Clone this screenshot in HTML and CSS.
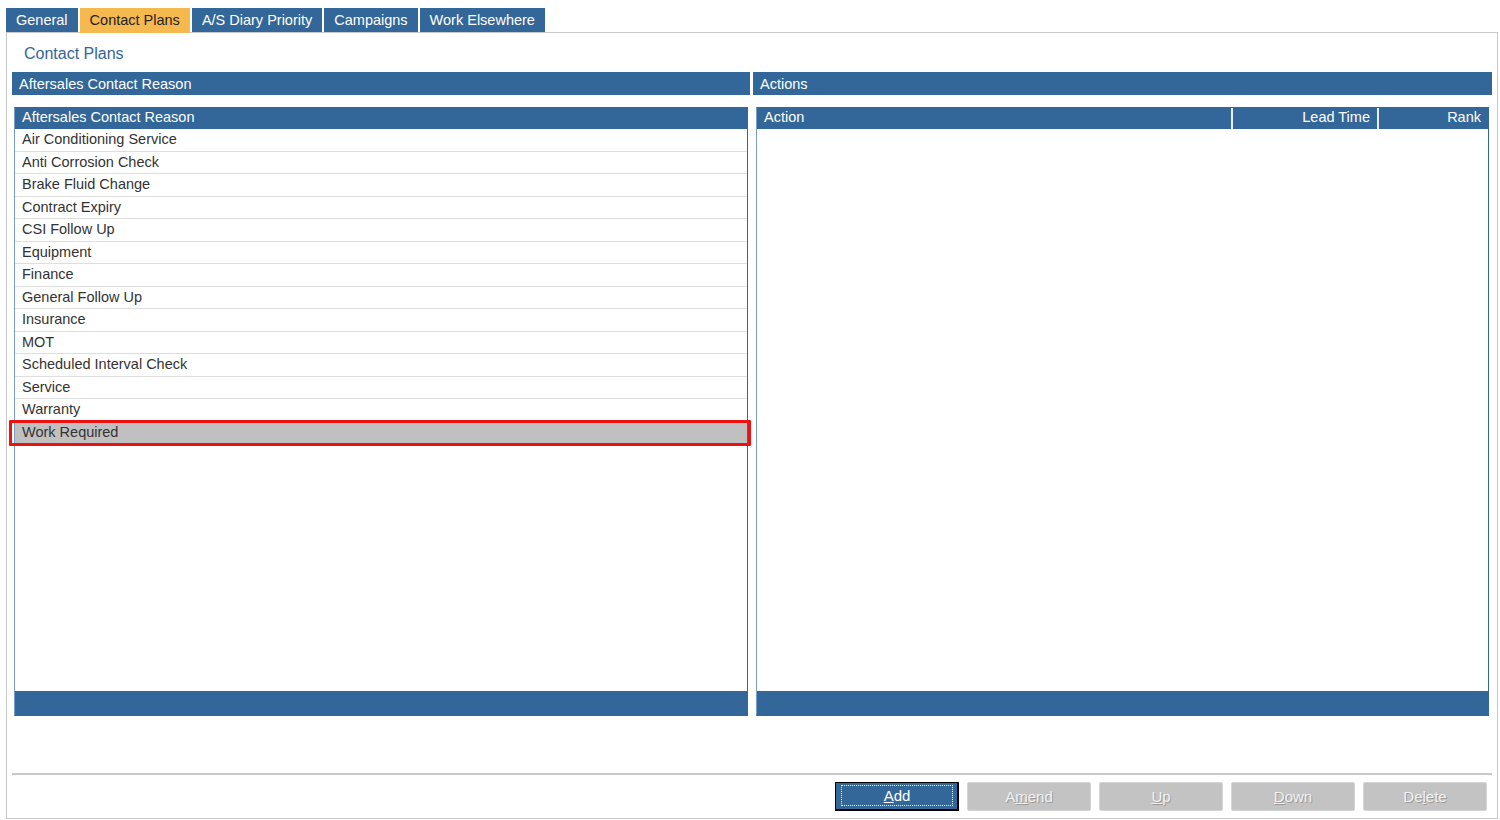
FILE: index.html
```html
<!DOCTYPE html>
<html lang="en">
<head>
  <meta charset="UTF-8" />
  <title>Contact Plans</title>
  <link rel="stylesheet" href="styles.css">
</head>
<body>
  <div class="tabs">
    <div class="tab">General</div>
    <div class="tab active">Contact Plans</div>
    <div class="tab">A/S Diary Priority</div>
    <div class="tab">Campaigns</div>
    <div class="tab">Work Elsewhere</div>
  </div>
  <div class="panel">
    <div class="title">Contact Plans</div>
    <div class="columns">
      <div class="column">
        <div class="bar">Aftersales Contact Reason</div>
        <div class="grid left">
          <div class="grid-head">
            <div class="cell">Aftersales Contact Reason</div>
          </div>
          <div class="grid-body">
            <div class="row">Air Conditioning Service</div>
            <div class="row">Anti Corrosion Check</div>
            <div class="row">Brake Fluid Change</div>
            <div class="row">Contract Expiry</div>
            <div class="row">CSI Follow Up</div>
            <div class="row">Equipment</div>
            <div class="row">Finance</div>
            <div class="row">General Follow Up</div>
            <div class="row">Insurance</div>
            <div class="row">MOT</div>
            <div class="row">Scheduled Interval Check</div>
            <div class="row">Service</div>
            <div class="row">Warranty</div>
            <div class="row selected">Work Required</div>
          </div>
          <div class="grid-foot"></div>
        </div>
      </div>
      <div class="column">
        <div class="bar">Actions</div>
        <div class="grid right">
          <div class="grid-head">
            <div class="cell action">Action</div>
            <div class="cell lead">Lead Time</div>
            <div class="cell rank">Rank</div>
          </div>
          <div class="grid-body"></div>
          <div class="grid-foot"></div>
        </div>
      </div>
    </div>
    <div class="footer">
      <div class="btn primary"><span class="focus"><u>A</u>dd</span></div>
      <div class="btn disabled">A<u>m</u>end</div>
      <div class="btn disabled"><u>U</u>p</div>
      <div class="btn disabled"><u>D</u>own</div>
      <div class="btn disabled">De<u>l</u>ete</div>
    </div>
  </div>
</body>
</html>
```

FILE: styles.css
```css
html, body {
  margin: 0; padding: 0;
  background: #fff;
  font-family: 'Liberation Sans', Arial, sans-serif;
  font-size: 14.5px;
  color: #333;
}
.tabs {
  display: flex; gap: 2px;
  padding: 8px 0 0 6px;
  height: 24px;
}
.tab {
  background: #336699;
  color: #fff;
  padding: 0 10px;
  line-height: 24px;
  height: 24px;
}
.tab.active {
  background: #f6b94f;
  color: #222;
  padding: 1px 10px 0;
  line-height: 23px;
}
.panel {
  margin-left: 6px;
  width: 1492px;
  height: 787px;
  border: 1px solid #c8c8c8;
  display: flex; flex-direction: column;
  padding: 0 5px 0 5px;
  box-sizing: border-box;
}
.title {
  color: #336699;
  font-size: 16px;
  padding: 10px 0 0 12px;
  height: 29px;
  box-sizing: border-box;
  line-height: 22px;
  margin-bottom: 10px;
}
.columns {
  display: grid;
  grid-template-columns: 738px 739px;
  gap: 3px;
}
.bar {
  background: #336699;
  color: #fff;
  height: 23px;
  line-height: 24px;
  padding-left: 7px;
}
.grid {
  margin-top: 12px;
  height: 609px;
  border: 1px solid #336699;
  border-left-color: #7a9fc4;
  display: flex; flex-direction: column;
  box-sizing: border-box;
}
.grid.left { margin: 12px 2px 0 2px; }
.grid.right { margin: 12px 3px 0 3px; }
.grid-head {
  display: flex;
  background: #336699;
  color: #fff;
  height: 21px;
  line-height: 19px;
}
.cell { padding: 0 7px; }
.cell.action { flex: 1; }
.cell.lead {
  width: 130px; text-align: right;
  border-left: 2px solid #e6eef6;
}
.cell.rank {
  width: 95px; text-align: right;
  border-left: 2px solid #e6eef6;
}
.grid-body {
  flex: 1;
  position: relative;
}
.row {
  height: 21.5px;
  line-height: 21px;
  padding-left: 7px;
  border-bottom: 1px solid #dedede;
  color: #333;
  position: relative;
}
.row.selected {
  background: #c0c0c0;
  border-bottom-color: #c0c0c0;
}
.row.selected::after {
  content: '';
  position: absolute;
  top: -2px; bottom: -3px; left: -6px; right: -4px;
  border: 3px solid #ee1111;
  border-radius: 1px;
}
.grid-foot {
  height: 24px;
  background: #336699;
}
.footer {
  margin-top: 57px;
  border-top: 2px solid #c8c8c8;
  display: flex; justify-content: flex-end; gap: 8px;
  padding: 7px 5px 0 0;
}
.btn {
  width: 124px; height: 29px;
  box-sizing: border-box;
  text-align: center;
  line-height: 27px;
  font-size: 15px;
}
.btn.primary {
  background: #336699;
  color: #fff;
  border: 1px solid #000;
  border-width: 1px 2px 2px 1px;
  padding: 2px 4px 2px 5px;
}
.btn.primary .focus {
  display: block;
  border: 1px dotted #fff;
  line-height: 19px;
  height: 21px;
  box-sizing: border-box;
}
.btn.disabled {
  background: #c3c3c3;
  border: 1px solid #d6d6d6;
  border-radius: 2px;
  color: #f2f2f2;
  text-shadow: 1px 1px 0 #9a9a9a;
}
```
